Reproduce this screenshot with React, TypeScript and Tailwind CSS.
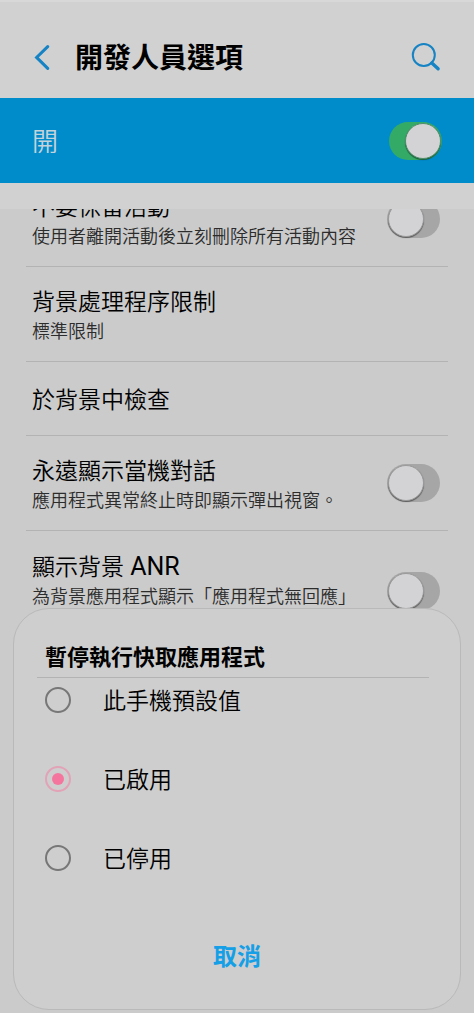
import { useState } from 'react';

interface SettingItem {
  id: string;
  title: string;
  suffix?: string;
  summary?: string;
  hasSwitch?: boolean;
  tall?: boolean;
}

const settings: SettingItem[] = [
  { id: 'keep', title: '不要保留活動', summary: '使用者離開活動後立刻刪除所有活動內容', hasSwitch: true },
  { id: 'limit', title: '背景處理程序限制', summary: '標準限制' },
  { id: 'check', title: '於背景中檢查' },
  { id: 'crash', title: '永遠顯示當機對話', summary: '應用程式異常終止時即顯示彈出視窗。', hasSwitch: true },
  { id: 'anr', title: '顯示背景', suffix: 'ANR', summary: '為背景應用程式顯示「應用程式無回應」', hasSwitch: true, tall: true },
];

const options = ['此手機預設值', '已啟用', '已停用'];

interface SwitchProps {
  id: string;
  label: string;
  defaultChecked?: boolean;
}

function Switch({ id, label, defaultChecked = false }: SwitchProps) {
  return (
    <input
      id={id}
      type="checkbox"
      role="switch"
      aria-label={label}
      defaultChecked={defaultChecked}
      className="block h-[38px] w-[53px] shrink-0 cursor-pointer appearance-none rounded-full bg-[#a6a6a6] p-px before:block before:size-[36px] before:rounded-full before:border before:border-[#9a9a9a] before:bg-[#d3d3d5] before:shadow-[0_1px_1px_rgba(0,0,0,0.45)] checked:bg-[#33ab67] checked:before:ml-[15px] checked:before:border-[#4f8f6c]"
    />
  );
}

export default function App() {
  const [selected, setSelected] = useState('已啟用');
  const [isOpen, setIsOpen] = useState(true);

  return (
    <div className="relative flex h-screen flex-col overflow-hidden bg-[#cbcbcb] font-[Roboto,'Noto_Sans_CJK_TC',sans-serif] text-[#111]">
      {/* Header */}
      <header className="flex h-[98px] shrink-0 items-center border-t-2 border-[#d8d8d8] bg-[#d1d1d1] px-8 pt-[18px]">
        <button aria-label="返回" className="flex w-[43px] shrink-0">
          <svg viewBox="0 0 20 28" className="h-7 w-5" fill="none" stroke="#1583c4" strokeWidth="3">
            <path d="M15.7 1.6 4.6 12.4l11.1 11" strokeLinecap="round" strokeLinejoin="miter" />
          </svg>
        </button>
        <h1 className="flex-1 text-[28px] leading-10 font-bold text-black">開發人員選項</h1>
        <button aria-label="搜尋" className="shrink-0">
          <svg viewBox="0 0 32 32" className="size-8" fill="none" stroke="#1583c4">
            <circle cx="13.8" cy="12" r="11" strokeWidth="2" />
            <path d="m21.8 20 6.3 5.8" strokeWidth="3.4" strokeLinecap="round" />
          </svg>
        </button>
      </header>

      {/* Master switch */}
      <div className="flex h-[85px] shrink-0 items-center justify-between bg-[#008ccb] px-8">
        <label htmlFor="master" className="pt-0.5 text-[26px] leading-9 font-[350] text-[#c6d3da]">
          開
        </label>
        <Switch id="master" label="開" defaultChecked />
      </div>
      <div className="h-[26px] shrink-0 bg-[#d1d1d1]" />

      {/* Settings list, scrolled part way through the first row */}
      <main className="min-h-0 flex-1 overflow-hidden px-[26px]">
        <ul className="-mt-[37px]">
          {settings.map((item) => (
            <li
              key={item.id}
              className={`flex items-center justify-between border-b border-[#b3b3b3] py-4 pr-2 pl-[6px] ${
                item.tall ? 'min-h-[121px]' : item.summary ? 'min-h-[95px]' : 'min-h-[74px]'
              }`}
            >
              <div className={item.tall ? 'self-start pt-1' : 'pt-1'}>
                <p className="text-[23px] leading-8 font-[350] text-black">
                  {item.title}
                  {item.suffix && <span className="text-[25px] font-normal"> {item.suffix}</span>}
                </p>
                {item.summary && (
                  <p className="text-[18px] leading-[26px] font-[350] text-[#2c2c2c]">{item.summary}</p>
                )}
              </div>
              {item.hasSwitch && <Switch id={item.id} label={item.title} />}
            </li>
          ))}
        </ul>
      </main>

      {/* Dialog */}
      {isOpen && (
        <div
          role="dialog"
          aria-labelledby="dialog-title"
          className="absolute inset-x-[13px] bottom-[3px] rounded-[36px] border border-[#b9b9b9] bg-[#cecece] px-[23px] pt-[30px] pb-8"
        >
          <h2
            id="dialog-title"
            className="mr-2 border-b border-[#b3b3b3] pl-2 text-[22px] leading-[38px] font-bold text-black"
          >
            暫停執行快取應用程式
          </h2>
          <div className="flex flex-col gap-[39px] px-2 pt-0.5">
            {options.map((option) => (
              <label
                key={option}
                className="flex h-10 cursor-pointer items-center gap-8 text-[23px] font-[350] text-black"
              >
                <input
                  type="radio"
                  name="cached-apps"
                  value={option}
                  checked={selected === option}
                  onChange={() => setSelected(option)}
                  className="grid size-[26px] shrink-0 appearance-none place-items-center rounded-full border-2 border-[#777] checked:border-[#e2a3b7] checked:before:block checked:before:size-3 checked:before:rounded-full checked:before:bg-[#f4769f]"
                />
                <span className="pt-1 leading-10">{option}</span>
              </label>
            ))}
          </div>
          <div className="mt-[59px] flex justify-center">
            <button
              onClick={() => setIsOpen(false)}
              className="px-6 text-[24px] leading-10 font-bold text-[#159fe6]"
            >
              取消
            </button>
          </div>
        </div>
      )}
    </div>
  );
}
